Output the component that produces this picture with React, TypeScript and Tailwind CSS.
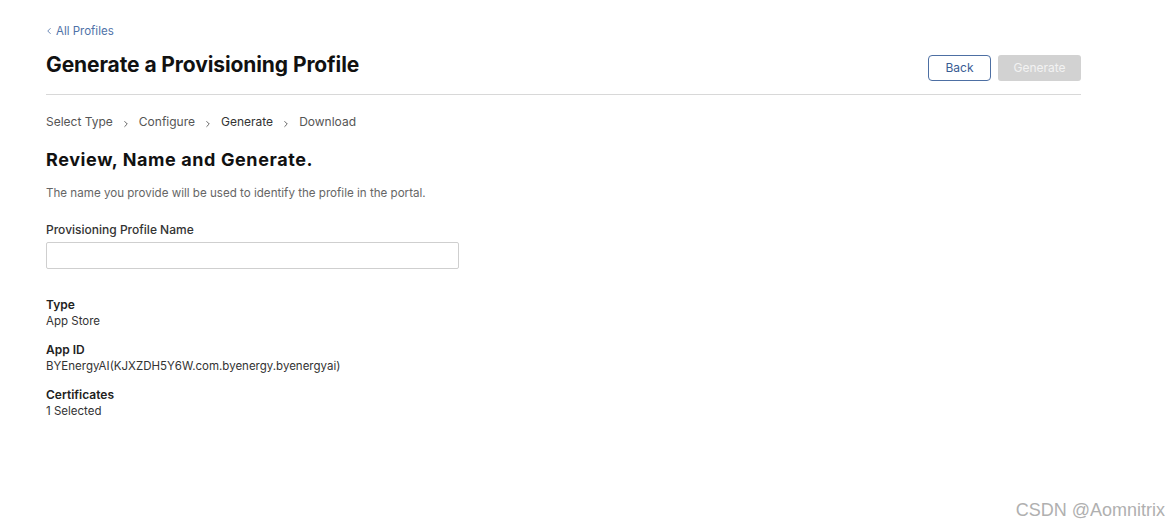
import { ChevronLeft, ChevronRight } from "lucide-react";

const steps = ["Select Type", "Configure", "Generate", "Download"];

const details = [
  { label: "Type", value: "App Store" },
  { label: "App ID", value: "BYEnergyAI(KJXZDH5Y6W.com.byenergy.byenergyai)" },
  { label: "Certificates", value: "1 Selected" },
];

export default function App() {
  return (
    <div className="relative min-h-[529px] bg-white font-['Inter',sans-serif] text-[#1d1d1f]">
      <div className="w-[1035px] ml-[46px] pt-[23px]">
        {/* back link */}
        <a className="flex items-center gap-[2px] text-[11.5px] text-[#4f72a8] leading-[16px]">
          <ChevronLeft className="w-[10px] h-[10px] -ml-[2px]" strokeWidth={2} />
          All Profiles
        </a>

        {/* header */}
        <div className="flex items-center justify-between mt-[10px] pb-[13px] border-b border-[#d8d8d8]">
          <h1 className="text-[21px] font-bold leading-[28px] text-[#111] tracking-[-0.1px]">
            Generate a Provisioning Profile
          </h1>
          <div className="flex gap-[7px] mt-[6px]">
            <button className="w-[63px] h-[26px] rounded-[4px] border border-[#4d6fa3] text-[12px] text-[#3a5c94] bg-white">
              Back
            </button>
            <button className="w-[83px] h-[26px] rounded-[3px] bg-[#d2d2d2] text-[12px] text-[#f2f2f2]">
              Generate
            </button>
          </div>
        </div>

        {/* steps */}
        <div className="flex items-center mt-[19px] text-[12px] leading-[16px] text-[#555]">
          {steps.map((s, i) => (
            <div key={s} className="flex items-center">
              <span className={s === "Generate" ? "text-[#333]" : ""}>{s}</span>
              {i < steps.length - 1 && (
                <ChevronRight className="w-[10px] h-[10px] mx-[8px] mt-[3px] text-[#555]" strokeWidth={2.2} />
              )}
            </div>
          ))}
        </div>

        <h2 className="mt-[18px] text-[18px] font-bold leading-[24px] tracking-[0.6px] text-[#111]">
          Review, Name and Generate.
        </h2>
        <p className="mt-[13px] text-[11.6px] leading-[16px] text-[#666]">
          The name you provide will be used to identify the profile in the portal.
        </p>

        <label className="block mt-[21px] text-[12px] font-medium leading-[16px] text-[#333]">
          Provisioning Profile Name
        </label>
        <input className="block mt-[4px] w-[413px] h-[27px] border border-[#cfcfcf] rounded-[2px] outline-none px-2 text-[12px]" />

        <div className="mt-[27px] flex flex-col gap-[11px]">
          {details.map((d) => (
            <div key={d.label} className="leading-[17px]">
              <div className="text-[12px] font-semibold text-[#222]">{d.label}</div>
              <div className="text-[11.5px] text-[#333]">{d.value}</div>
            </div>
          ))}
        </div>
      </div>

      <div className="absolute right-[4px] bottom-[7px] text-[18px] leading-[24px] text-[#b0b0b0] font-['Liberation_Sans',sans-serif]">
        CSDN @Aomnitrix
      </div>
    </div>
  );
}
